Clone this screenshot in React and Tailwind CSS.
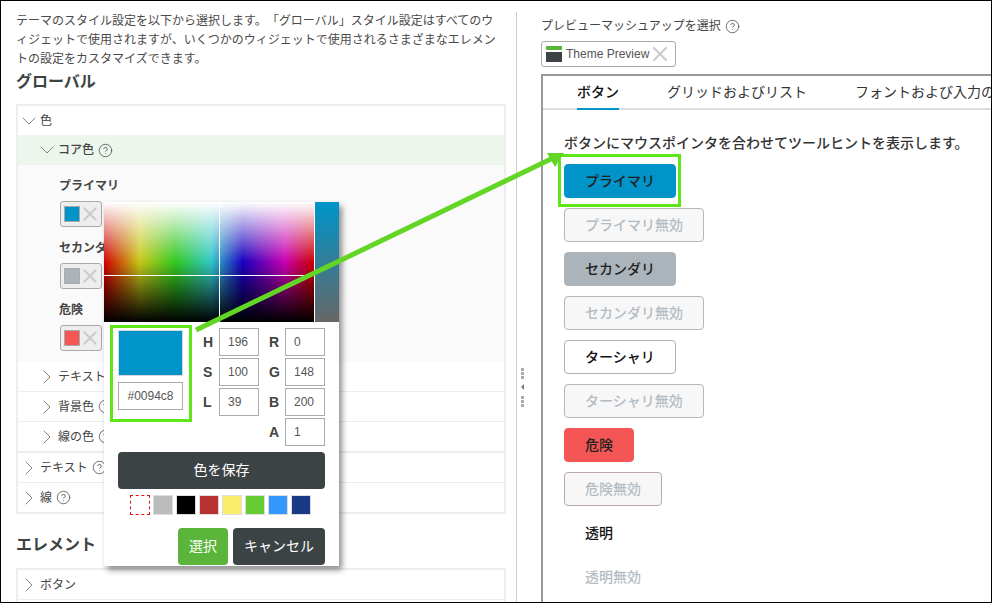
import { ChevronDown, ChevronRight, CircleHelp, X } from "lucide-react";

const font = "font-['Liberation_Sans','Noto_Sans_CJK_JP',sans-serif]";

const Help = () => <CircleHelp size={15} strokeWidth={1.2} className="ml-[4px] shrink-0 text-[#444]" />;

const Row = ({ label, sub, open, help, className = "" }) => (
  <div className={`flex items-center text-[12px] text-[#444] ${sub ? "pl-[18px]" : ""} ${className}`}>
    <span className="flex w-[22px] shrink-0 justify-center">
      {open ? (
        <ChevronDown size={24} strokeWidth={0.9} className="-mx-2 text-[#777]" />
      ) : (
        <ChevronRight size={24} strokeWidth={0.9} className="-mx-2 text-[#886f60]" />
      )}
    </span>
    {label}
    {help && <Help />}
  </div>
);

const ColorField = ({ label, color }) => (
  <div className="h-[62px]">
    <div className="-ml-px h-[18px] text-[12px] font-bold leading-[20px] text-[#444]">{label}</div>
    <div className="mt-[7px] flex h-[26px] w-[42px] items-center rounded-[3px] border border-[#aaa] bg-[#eee] pl-[3px]">
      <span className={`h-[16px] w-[16px] shrink-0 border border-[#aaa] ${color}`} />
      <X size={24} strokeWidth={2.2} className="-ml-[2px] shrink-0 scale-[0.95] text-[#ccc]" />
    </div>
  </div>
);

const Field = ({ label, value }) => (
  <div className="flex items-center">
    <span className="w-[16px] text-[14px] font-bold text-[#444]">{label}</span>
    <input
      readOnly
      value={value}
      className="h-[28px] w-[40px] border border-[#aaa] bg-white pl-[8px] text-[12px] text-[#555] outline-none"
    />
  </div>
);

const Picker = () => (
  <div className="absolute left-[104px] top-[202px] h-[364px] w-[235px] bg-white shadow-[3px_4px_6px_rgba(0,0,0,0.45)]">
    <div className="flex h-[120px]">
      <div className="relative w-[210px] bg-[linear-gradient(to_bottom,rgba(255,255,255,1)_0%,rgba(255,255,255,0)_50%,rgba(0,0,0,0)_50%,rgba(0,0,0,1)_100%),linear-gradient(to_right,#d00000_0%,#c8c818_17%,#30c820_34%,#30c8c8_51%,#1800c0_66%,#c800b0_86%,#d00000_100%)]">
        <div className="absolute bottom-0 left-[115px] top-0 w-px bg-white" />
        <div className="absolute left-0 right-0 top-[73px] h-px bg-white" />
      </div>
      <div className="ml-[1px] w-[24px] border-t-2 border-t-[#0094c8] bg-[linear-gradient(to_bottom,#0094c8,#666666)] pt-px" />
    </div>
    <div className="mt-[8px] flex pl-[14px]">
      <div className="w-[65px]">
        <div className="h-[46px] border border-[#d8d8d8] bg-[#0094c8]" />
        <input
          readOnly
          value="#0094c8"
          className="mt-[6px] h-[28px] w-[65px] border border-[#aaa] bg-white text-center text-[12px] text-[#555] outline-none"
        />
      </div>
      <div className="-mt-[2px] ml-[20px] grid grid-cols-[40px_40px] gap-x-[26px] gap-y-[2px] pl-[16px] [&>div]:-ml-[16px] [&>div]:w-[56px]">
        <Field label="H" value="196" />
        <Field label="R" value="0" />
        <Field label="S" value="100" />
        <Field label="G" value="148" />
        <Field label="L" value="39" />
        <Field label="B" value="200" />
        <span />
        <Field label="A" value="1" />
      </div>
    </div>
    <button className="mx-[14px] mt-[6px] block h-[37px] w-[207px] rounded-[4px] bg-[#3c4345] text-[14px] text-white">
      色を保存
    </button>
    <div className="ml-[26px] mt-[6px] flex gap-[3px]">
      <span className="h-[20px] w-[20px] border border-dashed border-[#e01010] bg-white" />
      {["bg-[#bbbbbb]", "bg-[#000000]", "bg-[#b93030]", "bg-[#f9ec6a]", "bg-[#66cc33]", "bg-[#3399ff]", "bg-[#1a3a85]"].map((c) => (
        <span key={c} className={`h-[20px] w-[20px] border border-[#ddd] ${c}`} />
      ))}
    </div>
    <div className="mr-[14px] mt-[13px] flex justify-end gap-[5px]">
      <button className="h-[37px] w-[50px] rounded-[4px] bg-[#5bb53b] text-[14px] text-white">選択</button>
      <button className="h-[37px] w-[92px] rounded-[4px] bg-[#3c4345] text-[14px] text-white">キャンセル</button>
    </div>
    <div className="absolute left-[6px] top-[123px] h-[97px] w-[82px] border-[3px] border-[#5fe617]" />
  </div>
);

const base = "flex h-[34px] items-center rounded-[4px] border pl-[20px] text-[14px] font-medium";
const off = "bg-[#f7f7f8] text-[#b4bcc3]";

const Preview = () => (
  <div className="mt-[7px] h-[540px] w-[460px] border-2 border-[#999] bg-white">
    <div className="flex h-[34px] gap-[48px] border-b-2 border-[#d9dde0] pl-[34px] text-[14px] leading-[32px] whitespace-nowrap text-[#333]">
      <span className="h-[34px] border-b-2 border-[#0094c8] font-medium text-[#111]">ボタン</span>
      <span>グリッドおよびリスト</span>
      <span>フォントおよび入力の</span>
    </div>
    <div className="pl-[21px] pt-[23px]">
      <p className="h-[20px] text-[14px] font-medium leading-[20px] text-[#333]">
        ボタンにマウスポインタを合わせてツールヒントを表示します。
      </p>
      <div className="mt-[11px] flex flex-col items-start gap-[10px]">
        <div className={`${base} w-[112px] border-[#0094c8] bg-[#0094c8] text-[#222]`}>プライマリ</div>
        <div className={`${base} w-[140px] border-[#b0b8c0] ${off}`}>プライマリ無効</div>
        <div className={`${base} w-[112px] border-[#acb4bb] bg-[#acb4bb] text-[#222]`}>セカンダリ</div>
        <div className={`${base} w-[140px] border-[#b0b8c0] ${off}`}>セカンダリ無効</div>
        <div className={`${base} w-[112px] border-[#a9b3bc] bg-white text-[#111]`}>ターシャリ</div>
        <div className={`${base} w-[140px] border-[#b0b8c0] ${off}`}>ターシャリ無効</div>
        <div className={`${base} w-[70px] border-[#f45555] bg-[#f45555] text-[#222]`}>危険</div>
        <div className={`${base} w-[98px] border-[#bbaaa8] ${off}`}>危険無効</div>
        <div className={`${base} border-transparent text-[#111]`}>透明</div>
        <div className={`${base} border-transparent text-[#b4bcc3]`}>透明無効</div>
      </div>
    </div>
  </div>
);

export default function App() {
  return (
    <div className={`relative flex h-[603px] w-[992px] overflow-hidden bg-white ${font}`}>
      <div className="w-[516px] shrink-0 pl-[16px] pr-[10px] pt-[12px]">
        <p className="pr-[4px] text-[12px] leading-[19px] text-[#4a4a4a] [line-break:loose] [text-spacing-trim:space-all]">
          テーマのスタイル設定を以下から選択します。「グローバル」スタイル設定はすべてのウィジェットで使用されますが、いくつかのウィジェットで使用されるさまざまなエレメントの設定をカスタマイズできます。
        </p>
        <h2 className="mb-[11px] h-[24px] text-[16px] font-bold leading-[26px] text-[#3c4345]">グローバル</h2>
        <div className="border-2 border-[#eee]">
          <Row label="色" open className="h-[29px]" />
          <Row label="コア色" sub open help className="h-[30px] bg-[#edf6ec] font-medium" />
          <div className="h-[197px] bg-[#fafafa] pl-[42px] pt-[11px]">
            <ColorField label="プライマリ" color="bg-[#0094c8]" />
            <ColorField label="セカンダリ" color="bg-[#acb4bb]" />
            <ColorField label="危険" color="bg-[#f45555]" />
          </div>
          <Row label="テキスト" sub help className="h-[30px] border-b border-[#eee]" />
          <Row label="背景色" sub help className="h-[30px] border-b border-[#eee]" />
          <Row label="線の色" sub help className="h-[31px] border-b-2 border-[#eee]" />
          <Row label="テキスト" help className="h-[30px] border-b border-[#eee]" />
          <Row label="線" help className="h-[29px]" />
        </div>
        <h2 className="mb-[12px] mt-[18px] h-[24px] text-[16px] font-bold leading-[26px] text-[#3c4345]">エレメント</h2>
        <div className="border-2 border-[#eee]">
          <Row label="ボタン" className="h-[30px] border-b border-[#eee]" />
          <div className="h-[30px]" />
        </div>
      </div>

      <div className="mt-[12px] flex-1 border-l border-[#ccc] pl-[24px] pt-[5px]">
        <div className="flex h-[18px] items-center text-[12px] text-[#444]">
          プレビューマッシュアップを選択
          <Help />
        </div>
        <div className="mt-[6px] flex h-[26px] w-[135px] items-center rounded-[3px] border border-[#aaa] pl-[4px]">
          <span className="flex h-[16px] w-[16px] flex-col justify-between">
            <span className="h-[4px] bg-[#5bb53b]" />
            <span className="h-[10px] bg-[#3c4345]" />
          </span>
          <span className="ml-[4px] text-[12px] text-[#555]">Theme Preview</span>
          <X size={24} strokeWidth={2.2} className="-ml-[1px] shrink-0 text-[#ccc]" />
        </div>
        <Preview />
      </div>

      <Picker />

      {/* splitter handle */}
      <div className="absolute left-[521px] top-[368px] flex flex-col items-center gap-[1px]">
        {[0, 1, 2].map((i) => (
          <span key={i} className="h-[3px] w-[3px] bg-[#aaa]" />
        ))}
        <span className="mb-[5px] mt-[4px] h-0 w-0 border-y-[3px] border-r-[3px] border-y-transparent border-r-[#777]" />
        {[0, 1, 2].map((i) => (
          <span key={i} className="h-[3px] w-[3px] bg-[#aaa]" />
        ))}
      </div>

      {/* annotation */}
      <div className="absolute left-[558px] top-[154px] h-[53px] w-[123px] border-[3px] border-[#5fe617]" />
      <svg className="pointer-events-none absolute left-0 top-0" width="992" height="603">
        <line x1="196" y1="330" x2="553" y2="158" stroke="#62d525" strokeWidth="5" />
        <polygon points="564,153 547,153 555,167" fill="#62d525" />
      </svg>
      <div className="pointer-events-none absolute inset-0 border border-black" />
    </div>
  );
}
